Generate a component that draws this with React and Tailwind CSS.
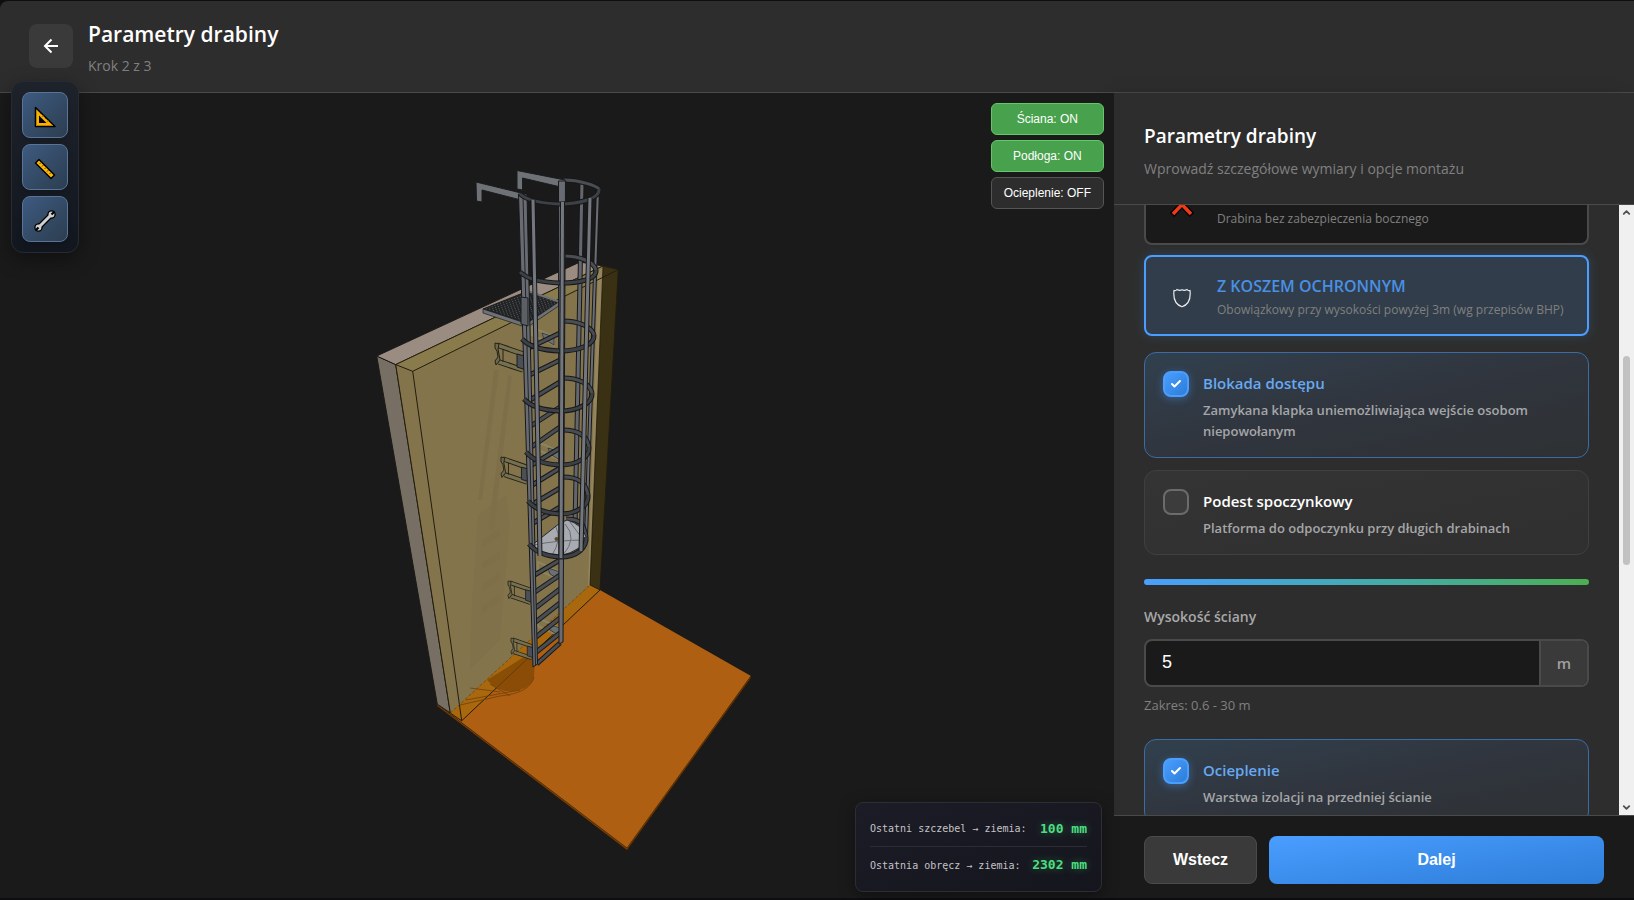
import React, { useState } from 'react';
import { Check, ChevronDown, ChevronUp } from 'lucide-react';

const RINGS = [
  { l: [520, 194], b: [560, 204], r: [599, 189], k: [564, 180] },
  { l: [520, 272], b: [560, 283], r: [596, 270], k: [564, 256] },
  { l: [522, 339], b: [560, 351], r: [594, 335], k: [563, 321] },
  { l: [524, 399], b: [560, 411], r: [592, 393], k: [563, 378] },
  { l: [526, 452], b: [560, 465], r: [589, 447], k: [563, 430] },
  { l: [528, 501], b: [560, 514], r: [588, 495], k: [563, 477] },
  { l: [529, 544], b: [560, 557], r: [586, 537], k: [566, 519] },
];

// left / right height of every rung
const RUNGS = [
  [348, 333], [375, 360], [400, 382], [426, 407], [447, 427], [465, 448], [485, 468],
  [504, 488], [523, 507], [575, 560], [592, 575], [608, 589], [622, 603], [637, 618],
  [652, 633], [664, 643],
];

const WALL_BRACKETS = [
  { x: 495, y: 343, s: 1 },
  { x: 501, y: 457, s: 0.93 },
  { x: 508, y: 581, s: 0.8 },
  { x: 511, y: 638, s: 0.74 },
];

const BACK_BRACKETS = [
  [532, 327], [538, 442], [538, 562], [538, 618],
];

function frontArc({ l, b, r }) {
  return `M${l[0]} ${l[1]} Q${l[0] + 10} ${b[1] - 1} ${b[0]} ${b[1]} C${b[0] + 18} ${b[1]} ${r[0] + 1} ${r[1] + 10} ${r[0]} ${r[1]}`;
}

function backArc({ r, k }) {
  return `M${r[0]} ${r[1]} C${r[0] - 2} ${k[1] + 6} ${k[0] + 16} ${k[1]} ${k[0]} ${k[1]}`;
}

function Tube({ d, w = 4, color = '#4a4e53' }) {
  return (
    <>
      <path d={d} fill="none" stroke="#17181a" strokeWidth={w} />
      <path d={d} fill="none" stroke={color} strokeWidth={w - 2} />
    </>
  );
}

function LadderScene() {
  return (
    <svg viewBox="0 93 1114 805" className="block w-full h-full" role="img" aria-label="Model 3D drabiny">
      <defs>
        <pattern id="grate" width="3" height="2" patternUnits="userSpaceOnUse" patternTransform="rotate(-20)">
          <rect width="3" height="2" fill="#202224" />
          <rect width="1" height="1" fill="#5a5d61" />
        </pattern>
      </defs>

      {/* floor */}
      <path d="M437 704 L590 585 L600 590 L751 676 L627 850Z" fill="#ae5f11" />
      <path d="M437 704 L627 848 L751 676 L751 678 L627 850 L437 706Z" fill="#7c430c" stroke="#2a1705" strokeWidth="0.6" />

      {/* wall */}
      <path d="M376.7 356 L395.7 364.6 L450.3 713 L437.3 704.2Z" fill="#776e64" stroke="#1c1a17" />
      <path d="M376.7 356 L580 262 L603 266 L395.7 364.6Z" fill="#9a8c80" stroke="#1c1a17" />

      {/* insulation */}
      <path d="M395.7 364.6 L603 266 L590 585 L450.3 713Z" fill="#83744c" />
      <path d="M395.7 364.6 L603 266 L618.3 269.7 L412.7 371.3Z" fill="#8a7b4c" />
      <path d="M603 266 L618.3 269.7 L600 590 L590 585Z" fill="#3a3114" />
      <path d="M598 271 L603 268 L590 585 L588 586Z" fill="#94855c" />
      <path d="M450.3 713 L590 585 L600 590 L461.7 720.8Z" fill="#a9680d" />
      <path d="M603 266 L590 585 L600 590" fill="none" stroke="#1d1909" strokeWidth="0.8" />
      <path d="M395.7 364.6 L603 266 L618.3 269.7 L600 590 L461.7 720.8 L450.3 713Z M395.7 364.6 L412.7 371.3 L461.7 720.8 M412.7 371.3 L618.3 269.7" fill="none" stroke="#221d0d" />
      <path d="M450.3 713 L590 585" fill="none" stroke="#57461a" strokeWidth="0.7" strokeDasharray="3 2" />

      {/* shadows */}
      <g fill="#5c5235" opacity="0.12">
        <path d="M494 370 L499 370 L482 500 L478 500Z M508 375 L512 376 L494 530 L488 530Z" />
        <path d="M478 515 L506 495 L510 520 L500 640 L470 670 L472 600Z" opacity="0.6" />
        <path d="M482 540 L500 528 V536 L482 548Z M482 562 L500 550 V558 L482 570Z M482 584 L500 572 V580 L482 592Z M482 606 L500 594 V602 L482 614Z" />
      </g>
      <path d="M487 680 L535 650 L534 677 Q532 688 514 691 Q498 693 487 680Z" fill="#7d4603" opacity="0.75" />
      <path d="M534 677 Q530 693 500 696 L460 705 M520 690 L466 700 M500 692 L470 688 M490 684 L510 696" fill="none" stroke="#6f410a" opacity="0.8" />

      {/* platform */}
      <path d="M483 309 L528 291 L560 302 L526 323Z" fill="url(#grate)" stroke="#1b1c1e" />
      <path d="M483 309 L525 323 V327 L483 313Z M526 324 L560 301 V305 L526 328Z" fill="#6e7277" stroke="#1b1c1e" strokeWidth="0.7" />
      <path d="M528 291 L560 302" stroke="#6e7277" strokeWidth="2" />

      {/* back of the cage */}
      <Tube d="M582 182 L575 527" w={5} color="#63676d" />
      <Tube d="M598 188 L586 537" w={4} color="#6b6f75" />
      {RINGS.map((ring) => (
        <Tube key={ring.k[1]} d={backArc(ring)} w={5} />
      ))}

      {BACK_BRACKETS.map(([x, y]) => (
        <g key={y} transform={`translate(${x} ${y})`}>
          <path d="M0 0 L22 10 V18 L0 8Z" fill="none" stroke="#8b855f" strokeWidth="2" />
          <path d="M10 6 L22 10 V18 L12 12Z" fill="#6c7075" stroke="#2a2b2d" strokeWidth="0.7" />
        </g>
      ))}

      {/* wall brackets */}
      {WALL_BRACKETS.map(({ x, y, s }) => (
        <g key={y} transform={`translate(${x} ${y}) scale(${s})`}>
          <path d="M2 2 L28 11 M4 19 L28 27" stroke="#222118" strokeWidth="5.5" />
          <path d="M2 2 L28 11 M4 19 L28 27" stroke="#77704f" strokeWidth="3.5" />
          <path d="M0 0 L4 1 L3 6 L5 17 L1 22 L0 18 L3 14 L2 8 L0 5Z" fill="#6f694c" stroke="#222118" />
          <path d="M8 6 V19" stroke="#222118" />
          <path d="M22 11 L34 14 V28 L22 24Z" fill="#4c5054" stroke="#1b1c1e" />
        </g>
      ))}

      {/* rungs */}
      {RUNGS.map(([yl, yr]) => (
        <Tube key={yl} d={`M${525 + (yl - 195) * 0.025} ${yl} L560 ${yr}`} w={5} />
      ))}

      {/* hatch */}
      <path d="M532 545 L560 523 L567 520 Q582 524 586 537 Q584 550 560 556 Q542 557 532 549Z" fill="#a8acb2" stroke="#24262a" />
      <path d="M534 545 Q558 540 585 540 M565 524 Q578 538 563 555 M556 527 Q562 540 552 555 M570 522 L584 541" fill="none" stroke="#6a6e74" />
      <circle cx="556.500" cy="539" r="2" fill="#5c4a22" />

      {/* handrails */}
      <path d="M476 182 L521 193 V200 L482 190 V202 L476.500 201Z" fill="#6e7277" stroke="#1b1c1e" />
      <path d="M517 170.500 L565 180 V188 L522.500 178 V190 L517 189Z" fill="#6e7277" stroke="#1b1c1e" />

      {/* stiles */}
      <path d="M518.500 194 L527 194 L537.500 664 L533 667Z" fill="#686c72" stroke="#17181a" />
      <path d="M523 196 L535.500 665" stroke="#222326" />
      <path d="M558.500 181 L565.500 181 L563 642 L559 644Z" fill="#686c72" stroke="#17181a" />
      <path d="M521 297 L528 298 V326 L521 324Z" fill="#5c6065" stroke="#1b1c1e" />

      {/* front of the cage */}
      {RINGS.map((ring) => (
        <Tube key={ring.l[1]} d={frontArc(ring)} w={5} color="#3d4145" />
      ))}
      <Tube d="M533 200 L540 556" w={5} color="#74787e" />
      <Tube d="M562.500 202 L561 558" w={5} color="#74787e" />
      <Tube d="M590 198 L581 551" w={5} color="#74787e" />
    </svg>
  );
}

function SetSquareIcon() {
  return (
    <svg width="22" height="22" viewBox="0 0 22 22" aria-hidden="true">
      <path d="M1.500 1.500 L21 20.500 H1.500Z" fill="#f9b200" stroke="#000" strokeWidth="1.500" strokeLinejoin="round" />
      <path d="M5 9.500 L12.500 17 H5Z" fill="#000" />
      <path d="M2 19.500 H19" stroke="#c77f00" />
      <path d="M6 8 l1 -1 M8.500 10.500 l1 -1 M11 13 l1 -1 M13.500 15.500 l1 -1" stroke="#7a5200" />
    </svg>
  );
}

function RulerIcon() {
  return (
    <svg width="22" height="22" viewBox="0 0 22 22" aria-hidden="true">
      <path d="M1.500 5 L5 1.500 L20.500 17 L17 20.500Z" fill="#ffb800" stroke="#000" strokeWidth="1.500" strokeLinejoin="round" />
      <path d="M7 4.500 l-1.500 1.500 M9.500 7 l-1.500 1.500 M12 9.500 l-1.500 1.500 M14.500 12 l-1.500 1.500 M17 14.500 l-1.500 1.500" stroke="#5c4200" />
    </svg>
  );
}

function WrenchIcon() {
  return (
    <svg width="22" height="22" viewBox="0 0 22 22" aria-hidden="true">
      <path d="M5 17 L17 5" stroke="#000" strokeWidth="5.500" />
      <circle cx="4.500" cy="17.500" r="4.200" fill="#000" />
      <circle cx="17.500" cy="4.500" r="4.200" fill="#000" />
      <circle cx="4.500" cy="17.500" r="2.900" fill="#d0d0d0" />
      <circle cx="17.500" cy="4.500" r="2.900" fill="#d0d0d0" />
      <path d="M5 17 L17 5" stroke="#d0d0d0" strokeWidth="3" />
      <path d="M4.500 17.500 L1.500 20.500 M17.500 4.500 L20.500 1.500" stroke="#000" strokeWidth="2.200" />
    </svg>
  );
}

function CrossIcon() {
  return (
    <svg width="24" height="24" viewBox="0 0 24 24" aria-hidden="true">
      <path d="M2 -1 L22 20 M22 -1 L2 20" stroke="#000" strokeWidth="6" />
      <path d="M3 0 L21 19 M21 0 L3 19" stroke="#f03a17" strokeWidth="3.500" />
    </svg>
  );
}

function ShieldIcon() {
  return (
    <svg width="20" height="20" viewBox="0 0 20 20" fill="none" stroke="#e8eaed" strokeWidth="1.200" aria-hidden="true">
      <path d="M2 2.500 Q4 3 5 1.500 Q7.500 3 10 1.800 Q12.500 3 15 1.500 Q16 3 18 2.500 Q19.500 15.500 10 18.800 Q0.500 15.500 2 2.500Z" />
    </svg>
  );
}

function ToolButton({ label, children }) {
  return (
    <button
      type="button"
      aria-label={label}
      className="w-[46px] h-[46px] rounded-lg border border-[#5a7497] bg-linear-to-br from-[#3d5a80] to-[#2c3e50] flex items-center justify-center pt-1 shadow-md"
    >
      {children}
    </button>
  );
}

function LayerToggle({ name }) {
  const [on, setOn] = useState(name !== 'Ocieplenie');

  return (
    <button
      type="button"
      onClick={() => setOn(!on)}
      className={`h-8 rounded-md border px-3 text-xs font-medium text-white font-['Liberation_Sans',sans-serif] ${
        on ? 'bg-[#48a14c] border-[#66c76a]' : 'bg-[#2d2d2d] border-[#555555]'
      }`}
    >
      {name}: {on ? 'ON' : 'OFF'}
    </button>
  );
}

function CheckCard({ id, title, text, defaultChecked = false, className = '' }) {
  const [checked, setChecked] = useState(defaultChecked);

  return (
    <label
      htmlFor={id}
      className={`flex items-start gap-3.5 rounded-xl border px-[18px] pt-[17px] pb-[15px] cursor-pointer ${
        checked
          ? 'border-[#3b6ca6] bg-linear-to-br from-[#31404e] via-[#30353e] to-[#2e3133]'
          : 'border-[#404040] bg-linear-to-br from-[#343434] to-[#2f2f2f]'
      } ${className}`}
    >
      <span className="grid shrink-0 mt-px place-items-center">
        <input
          id={id}
          type="checkbox"
          checked={checked}
          onChange={(e) => setChecked(e.target.checked)}
          className="appearance-none col-start-1 row-start-1 w-[26px] h-[26px] rounded-lg border-2 border-[#6b6b6b] bg-[#3c3c3c] checked:border-[#4a9eff] checked:bg-linear-to-br checked:from-[#4a9eff] checked:to-[#2d7dd9] checked:shadow-[0_2px_8px_rgba(74,158,255,0.4)]"
        />
        {checked && <Check size={12} strokeWidth={4} className="col-start-1 row-start-1 text-white pointer-events-none" />}
      </span>
      <span className="flex flex-col gap-1">
        <span className={`text-[15px] leading-[26px] font-semibold ${checked ? 'text-[#67a9f2]' : 'text-white'}`}>{title}</span>
        <span className="text-[13px] leading-[21px] font-semibold text-[#a5a6a8]">{text}</span>
      </span>
    </label>
  );
}

function Measure({ label, value }) {
  return (
    <div className="flex items-center justify-between h-9">
      <span className="text-[10px] text-[#c4c4c8]">{label}</span>
      <span className="text-[13px] font-bold text-[#4ade80] [text-shadow:0_0_8px_rgba(74,222,128,0.4)]">{value}</span>
    </div>
  );
}

function App() {
  const [height, setHeight] = useState('5');

  return (
    <div className="h-screen flex flex-col pt-px pb-0.5 bg-[#0e0e10] text-white font-['Open_Sans','Noto_Sans',sans-serif]">
      <header className="flex items-center gap-[15px] px-[29px] pb-px h-[92px] shrink-0 rounded-tl-lg bg-[#2d2d2d] border-b border-[#4a4a4a]">
        <button type="button" aria-label="Wróć" className="w-11 h-11 rounded-lg bg-[#3a3a3a] flex items-center justify-center">
          <svg width="16" height="16" viewBox="0 0 16 16" fill="none" stroke="#fff" strokeWidth="2" aria-hidden="true">
            <path d="M15 8 H2 M8.500 1.500 L2 8 L8.500 14.500" />
          </svg>
        </button>
        <div className="flex flex-col gap-2 pt-1">
          <h1 className="text-[21px] leading-7 font-semibold">Parametry drabiny</h1>
          <p className="text-sm leading-5 text-[#808080]">Krok 2 z 3</p>
        </div>
      </header>

      <div className="flex flex-1 min-h-0">
        <main className="relative flex-1 min-w-0 bg-[#1a1a1a]">
          <LadderScene />

          <div className="absolute left-[11px] -top-3 flex flex-col gap-1.5 p-2.5 rounded-xl border border-[#262a32] bg-linear-to-b from-[#1e222b] to-[#12161e] shadow-[0_6px_20px_rgba(0,0,0,0.4)]">
            <ToolButton label="Kąt"><SetSquareIcon /></ToolButton>
            <ToolButton label="Wymiary"><RulerIcon /></ToolButton>
            <ToolButton label="Narzędzia"><WrenchIcon /></ToolButton>
          </div>

          <div className="absolute top-2.5 right-2.5 flex flex-col gap-[5px]">
            <LayerToggle name="Ściana" />
            <LayerToggle name="Podłoga" />
            <LayerToggle name="Ocieplenie" />
          </div>

          <div className="absolute right-3 bottom-1.5 w-[247px] px-3.5 py-2 rounded-lg border border-[#2d2d35] bg-linear-to-br from-[#1c1c26] to-[#15151e] shadow-[0_4px_16px_rgba(0,0,0,0.4)] divide-y divide-[#2c2c35] font-['DejaVu_Sans_Mono',monospace]">
            <Measure label="Ostatni szczebel → ziemia:" value="100 mm" />
            <Measure label="Ostatnia obręcz → ziemia:" value="2302 mm" />
          </div>
        </main>

        <aside className="w-[520px] shrink-0 flex flex-col bg-[#2d2d2d] shadow-[-8px_0_16px_-8px_rgba(0,0,0,0.5)]">
          <div className="px-[30px] pt-7 pb-[23px] border-b border-[#4a4a4a]">
            <h2 className="text-[19px] leading-[30px] font-semibold">Parametry drabiny</h2>
            <p className="mt-1.5 text-sm leading-6 text-[#808080]">Wprowadź szczegółowe wymiary i opcje montażu</p>
          </div>

          <div className="flex flex-1 min-h-0">
            <div className="flex-1 min-w-0 overflow-hidden px-[30px]">
              {/* list is scrolled, the first option is partly hidden */}
              <div className="-mt-[41px] flex flex-col gap-2.5">
                <button type="button" className="h-[81px] flex items-center text-left rounded-lg border-2 border-[#4a4a4a] bg-[#1a1a1a]">
                  <span className="w-[71px] shrink-0 flex justify-center pt-1"><CrossIcon /></span>
                  <span className="pt-7 text-xs leading-5 text-[#808080]">Drabina bez zabezpieczenia bocznego</span>
                </button>
                <button type="button" className="h-[81px] flex items-center text-left rounded-lg border-2 border-[#4a9eff] bg-[#313d4a] shadow-[0_0_12px_rgba(74,158,255,0.2)]">
                  <span className="w-[71px] shrink-0 flex justify-center pt-1"><ShieldIcon /></span>
                  <span className="flex flex-col gap-1 pt-1">
                    <span className="text-base leading-5 font-semibold text-[#4a90e2]">Z KOSZEM OCHRONNYM</span>
                    <span className="text-xs leading-5 text-[#808080] whitespace-nowrap">Obowiązkowy przy wysokości powyżej 3m (wg przepisów BHP)</span>
                  </span>
                </button>
              </div>

              <div className="mt-4 flex flex-col gap-3">
                <CheckCard id="blokada" defaultChecked title="Blokada dostępu" text="Zamykana klapka uniemożliwiająca wejście osobom niepowołanym" />
                <CheckCard id="podest" title="Podest spoczynkowy" text="Platforma do odpoczynku przy długich drabinach" />
              </div>

              <div className="mt-6 h-1.5 rounded-full bg-linear-to-r from-[#4a9eff] to-[#4caf50]" />

              <label htmlFor="wysokosc" className="block mt-5 text-sm leading-6 font-semibold text-[#a8a8a8]">Wysokość ściany</label>
              <div className="mt-2.5 flex h-12 rounded-lg border-2 border-[#4a4a4a] bg-[#1a1a1a] overflow-hidden">
                <input
                  id="wysokosc"
                  type="text"
                  inputMode="decimal"
                  value={height}
                  onChange={(e) => setHeight(e.target.value)}
                  className="flex-1 min-w-0 px-4 pb-0.5 bg-transparent text-lg font-medium text-white outline-none font-['Liberation_Sans',sans-serif]"
                />
                <span className="w-12 flex items-center justify-center border-l-2 border-[#4a4a4a] bg-[#3a3a3a] text-[15px] font-semibold text-[#a0a0a0]">m</span>
              </div>
              <p className="mt-2 text-[13px] leading-5 text-[#808080]">Zakres: 0.6 - 30 m</p>

              <CheckCard id="ocieplenie" defaultChecked className="mt-6" title="Ocieplenie" text="Warstwa izolacji na przedniej ścianie" />
            </div>

            <div className="w-[15px] shrink-0 flex flex-col items-center bg-[#f0f0f0] text-[#505050]" aria-hidden="true">
              <ChevronUp size={11} strokeWidth={4} className="mt-0.5" />
              <div className="mt-[138px] h-[209px] w-[7px] rounded-full bg-[#c1c1c1]" />
              <ChevronDown size={11} strokeWidth={4} className="mt-auto mb-0.5" />
            </div>
          </div>

          <footer className="flex gap-3 px-[30px] pt-5 pb-3.5 bg-[#1a1a1a] border-t border-[#4a4a4a] font-['Liberation_Sans',sans-serif]">
            <button type="button" className="w-[113px] h-12 rounded-lg border border-[#4a4a4a] bg-[#3a3a3a] text-base font-bold">Wstecz</button>
            <button type="button" className="flex-1 h-12 rounded-lg bg-linear-to-br from-[#4a9eff] to-[#2d7dd9] text-base font-bold">Dalej</button>
          </footer>
        </aside>
      </div>
    </div>
  );
}

export default App;
